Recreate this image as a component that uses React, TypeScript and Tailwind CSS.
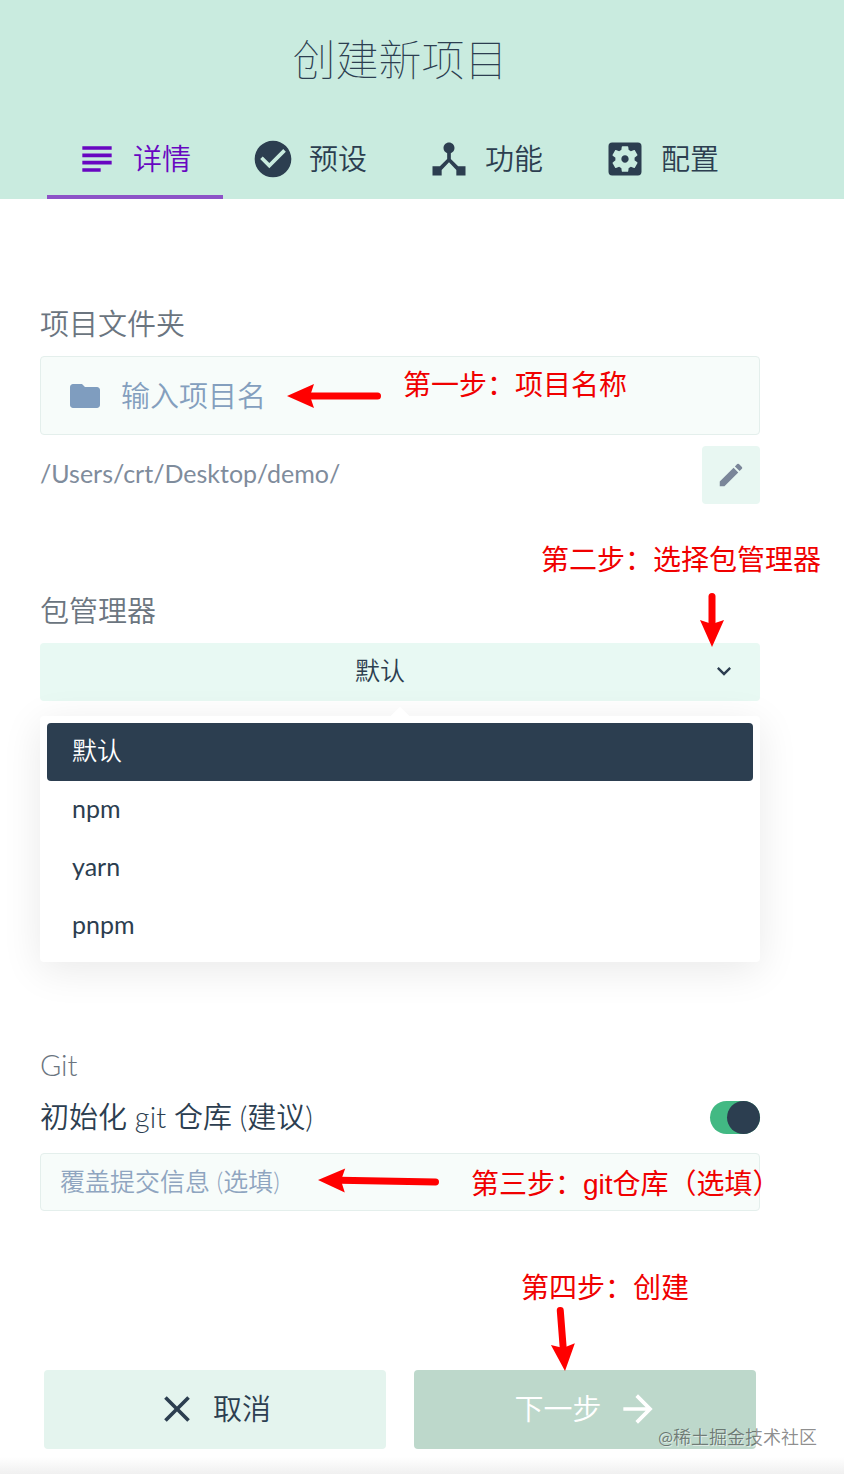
import React, { useState } from 'react';
import {
  MdArrowForward,
  MdCheckCircle,
  MdClose,
  MdDeviceHub,
  MdEdit,
  MdFolder,
  MdKeyboardArrowDown,
  MdSettingsApplications,
  MdSubject,
} from 'react-icons/md';

const tabs = [
  { id: 'details', label: '详情', icon: MdSubject },
  { id: 'presets', label: '预设', icon: MdCheckCircle },
  { id: 'features', label: '功能', icon: MdDeviceHub },
  { id: 'config', label: '配置', icon: MdSettingsApplications },
];

const managers = ['默认', 'npm', 'yarn', 'pnpm'];

type ArrowProps = {
  className: string;
  width: number;
  height: number;
  tail: [number, number];
  tip: [number, number];
};

// Red pointer: round-ended shaft with a swept-back head
const Arrow: React.FC<ArrowProps> = ({ className, width, height, tail, tip }) => {
  const dx = tip[0] - tail[0];
  const dy = tip[1] - tail[1];
  const length = Math.hypot(dx, dy);
  const angle = (Math.atan2(dy, dx) * 180) / Math.PI;

  return (
    <svg
      className={`absolute pointer-events-none ${className}`}
      width={width}
      height={height}
      viewBox={`0 0 ${width} ${height}`}
      fill="#ff0000"
      aria-hidden="true"
    >
      <g transform={`translate(${tip[0]} ${tip[1]}) rotate(${angle})`}>
        <path d="M0 0L-27 12L-24 3V-3L-27 -12Z" />
        <path d={`M-22 0H${-length + 3.5}`} stroke="#ff0000" strokeWidth="7" strokeLinecap="round" />
      </g>
    </svg>
  );
};

const Note: React.FC<{ className: string; children: React.ReactNode }> = ({ className, children }) => (
  <p
    className={`absolute z-20 whitespace-nowrap pointer-events-none font-['Liberation_Sans','Noto_Sans_CJK_SC',sans-serif] text-[28px] leading-9 font-normal text-[#f00000] ${className}`}
  >
    {children}
  </p>
);

const Header: React.FC<{ active: string; onChange: (id: string) => void }> = ({ active, onChange }) => (
  <header className="bg-[#c9ebdf] pt-8 pr-11">
    <h1 className="text-center text-[43px] leading-14 font-thin">创建新项目</h1>
    <nav className="mt-8 flex pl-[47px]">
      {tabs.map(({ id, label, icon: Icon }) => (
        <button
          key={id}
          type="button"
          onClick={() => onChange(id)}
          className={`relative flex h-[79px] w-44 items-center justify-center gap-3.5 pr-1 pb-0.5 ${
            active === id ? 'text-[#6806c1]' : ''
          }`}
        >
          <Icon className="size-11" />
          <span>{label}</span>
          {active === id && <span className="absolute inset-x-0 bottom-0 h-1 bg-[#8d52c7]" />}
        </button>
      ))}
    </nav>
  </header>
);

const App: React.FC = () => {
  const [tab, setTab] = useState('details');
  const [manager, setManager] = useState('默认');
  const [git, setGit] = useState(true);

  return (
    <div className="relative bg-white font-['Lato','Noto_Sans_CJK_SC',sans-serif] text-[29px] leading-10 font-[350] text-[#2c3e50]">
      <Header active={tab} onChange={setTab} />

      <main className="mr-11 px-10 pt-[105px]">
        <section>
          <label htmlFor="folder" className="block text-[#6b7580]">
            项目文件夹
          </label>
          <div className="relative mt-3 flex h-[79px] items-center gap-[18px] rounded border border-[#e4efec] bg-[#f7fcfa] pl-[26px]">
            <MdFolder className="size-9 shrink-0 text-[#7f9dbf]" />
            <input
              id="folder"
              type="text"
              placeholder="输入项目名"
              className="min-w-0 flex-1 bg-transparent outline-none placeholder:text-[#849fbe]"
            />
            <Arrow className="top-[27px] left-[244px]" width={98} height={24} tail={[96, 12]} tip={[2, 12]} />
            <Note className="top-[11px] left-[362px]">第一步：项目名称</Note>
          </div>
          <div className="mt-[11px] flex items-center justify-between text-[25px] text-[#7f8c9c]">
            <span className="pb-1 font-normal">/Users/crt/Desktop/demo/</span>
            <button
              type="button"
              aria-label="编辑"
              className="flex size-[58px] items-center justify-center rounded bg-[#e8f7f2] text-[#7a8699]"
            >
              <MdEdit className="size-[30px]" />
            </button>
          </div>
        </section>

        <section className="relative mt-[87px]">
          <Note className="-top-12 -right-[61px]">第二步：选择包管理器</Note>
          <label htmlFor="manager" className="block text-[#6b7580]">
            包管理器
          </label>
          <div className="relative mt-3">
            <select
              id="manager"
              value={manager}
              onChange={(e) => setManager(e.target.value)}
              className="block h-[58px] w-full appearance-none rounded bg-[#e8f9f3] pr-10 pb-1 text-center text-[25px] outline-none [text-align-last:center]"
            >
              {managers.map((m) => (
                <option key={m}>{m}</option>
              ))}
            </select>
            <MdKeyboardArrowDown className="pointer-events-none absolute top-[14px] right-[22px] size-7" />
            <Arrow className="-top-[51px] right-[35px]" width={26} height={56} tail={[13, 1]} tip={[13, 55]} />

            <ul
              role="listbox"
              aria-label="包管理器"
              className="absolute inset-x-0 top-[73px] rounded bg-white p-[7px] text-[25px] shadow-[0_8px_40px_rgba(0,0,0,0.09)]"
            >
              <li role="presentation" className="absolute -top-1.5 left-1/2 size-4 -translate-x-1/2 rotate-45 bg-white" />
              {managers.map((m) => (
                <li
                  key={m}
                  role="option"
                  aria-selected={m === manager}
                  onClick={() => setManager(m)}
                  className={`relative flex h-[58px] items-center rounded px-[25px] pb-1 ${
                    m === manager ? 'bg-[#2c3e50] text-white' : 'font-normal'
                  }`}
                >
                  {m}
                </li>
              ))}
            </ul>
          </div>
        </section>

        <section className="mt-[344px]">
          <h2 className="text-[#6b7580]">Git</h2>
          <div className="mt-3 flex items-center justify-between">
            <label htmlFor="git">初始化 git 仓库 (建议)</label>
            <input
              id="git"
              type="checkbox"
              role="switch"
              checked={git}
              onChange={(e) => setGit(e.target.checked)}
              className="relative h-[33px] w-[50px] appearance-none rounded-full bg-[#b8c5cf] before:absolute before:left-0 before:size-[33px] before:rounded-full before:bg-[#2c3e50] checked:bg-[#42b983] checked:before:left-[17px]"
            />
          </div>
          <div className="relative mt-4">
            <input
              type="text"
              aria-label="覆盖提交信息"
              placeholder="覆盖提交信息 (选填)"
              className="block h-[58px] w-full rounded border border-[#e4efec] bg-[#f7fcfa] px-[19px] pb-0.5 text-[25px] outline-none placeholder:text-[#8fa5c0]"
            />
            <Arrow className="top-[14px] left-[277px]" width={124} height={28} tail={[122, 15]} tip={[1, 13]} />
            <Note className="top-[14px] left-[431px]">第三步：git仓库（选填）</Note>
          </div>
        </section>
      </main>

      <footer className="relative mt-[159px] mr-11 grid grid-cols-2 gap-7 px-11">
        <Note className="-top-[99px] left-[521px]">第四步：创建</Note>
        <Arrow className="-top-16 left-[550px]" width={30} height={66} tail={[10, 1]} tip={[15, 65]} />
        <button
          type="button"
          className="flex h-[79px] items-center justify-center gap-3.5 rounded bg-[#e4f4ee] pr-1 pb-0.5"
        >
          <MdClose className="size-11" />
          取消
        </button>
        <button
          type="button"
          className="flex h-[79px] items-center justify-center gap-3.5 rounded bg-[#bdd8cb] pb-0.5 pl-1 text-white"
        >
          下一步
          <MdArrowForward className="size-11" />
        </button>
      </footer>
      <div className="mt-2 h-[17px] bg-linear-to-b from-white to-[#f0f0f0]" />

      <p className="absolute right-[27px] bottom-[25px] text-lg leading-6 font-normal text-black/45 [text-shadow:1px_1px_0_rgba(255,255,255,0.5)]">
        @稀土掘金技术社区
      </p>
    </div>
  );
};

export default App;
